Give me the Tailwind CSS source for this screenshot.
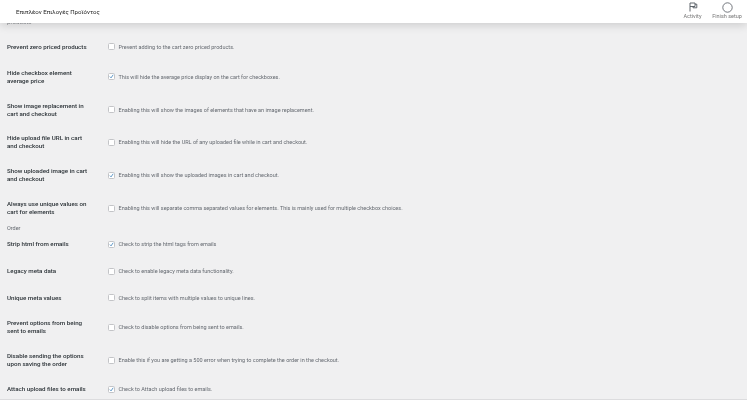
<!DOCTYPE html>
<html lang="en">

<head>
  <meta charset="UTF-8">
  <meta name="viewport" content="width=device-width, initial-scale=1.0">
  <title>Product options settings</title>
  <script src="https://cdn.jsdelivr.net/npm/@tailwindcss/browser@4"></script>
</head>

<body class="bg-[#f0f0f1] font-['Roboto','Noto_Sans',sans-serif] overflow-hidden">
  <div class="relative h-[400px] w-[747px] overflow-hidden border-b border-[#dcdcde]">
    <!-- Top bar -->
    <header class="relative z-10 flex h-[23px] items-center justify-between bg-white pl-[16px] shadow-[0_2px_10px_rgba(0,0,0,0.16)]">
      <h1 class="text-[6.1px] text-[#1e1e1e] blur-[0.25px]">Επιπλέον Επιλογές Προϊόντος</h1>
      <div class="flex h-full text-[#757575] blur-[0.25px]">
        <div class="flex w-[29px] flex-col items-center pt-[2px]">
          <svg class="h-[10px] w-[10px]" viewBox="0 0 10 10" fill="none" stroke="#50575e" stroke-width="0.9">
            <path d="M2 9.5V1h5v3.5H2M7 2.2H8.8V5.8H5V4.5" />
          </svg>
          <span class="mt-[0.5px] text-[5.5px] leading-[7px]">Activity</span>
        </div>
        <div class="flex w-[40px] flex-col items-center pt-[1.5px]">
          <svg class="h-[11px] w-[11px]" viewBox="0 0 11 11" fill="none" stroke="#50575e" stroke-width="0.8">
            <circle cx="5.5" cy="5.5" r="4.7" />
          </svg>
          <span class="text-[5.5px] leading-[7px]">Finish setup</span>
        </div>
      </div>
    </header>

    <main class="pl-[7px] text-[6.2px] leading-[8px] blur-[0.25px]">
      <p class="-mt-[5px] h-[15px] text-[#8c8f94]">products</p>

      <div class="grid h-[27px] grid-cols-[101px_1fr] items-center">
        <span class="font-medium text-[#2c3338]">Prevent zero priced products</span>
        <label class="flex items-center gap-[3.5px] text-[5.5px] text-[#646970]"><span class="h-[7px] w-[7px] rounded-[1.5px] border-[0.5px] border-[#c3c4c7] bg-white"></span>Prevent adding to the cart zero priced products.</label>
      </div>

      <div class="grid h-[33px] grid-cols-[101px_1fr] items-center">
        <span class="w-[85px] font-medium text-[#2c3338]">Hide checkbox element average price</span>
        <label class="flex items-center gap-[3.5px] text-[5.5px] text-[#646970]">
          <svg class="h-[7px] w-[7px] rounded-[1.5px] border-[0.5px] border-[#c3c4c7] bg-white" viewBox="0 0 7 7" fill="none" stroke="#2271b1" stroke-width="1"><path d="M1.2 3.6 2.9 5.4 5.9 1" /></svg>
          This will hide the average price display on the cart for checkboxes.
        </label>
      </div>

      <div class="grid h-[33px] grid-cols-[101px_1fr] items-center">
        <span class="w-[85px] font-medium text-[#2c3338]">Show image replacement in cart and checkout</span>
        <label class="flex items-center gap-[3.5px] text-[5.5px] text-[#646970]"><span class="h-[7px] w-[7px] rounded-[1.5px] border-[0.5px] border-[#c3c4c7] bg-white"></span>Enabling this will show the images of elements that have an image replacement.</label>
      </div>

      <div class="grid h-[32px] grid-cols-[101px_1fr] items-center">
        <span class="w-[85px] font-medium text-[#2c3338]">Hide upload file URL in cart and checkout</span>
        <label class="flex items-center gap-[3.5px] text-[5.5px] text-[#646970]"><span class="h-[7px] w-[7px] rounded-[1.5px] border-[0.5px] border-[#c3c4c7] bg-white"></span>Enabling this will hide the URL of any uploaded file while in cart and checkout.</label>
      </div>

      <div class="grid h-[34px] grid-cols-[101px_1fr] items-center">
        <span class="w-[85px] font-medium text-[#2c3338]">Show uploaded image in cart and checkout</span>
        <label class="flex items-center gap-[3.5px] text-[5.5px] text-[#646970]">
          <svg class="h-[7px] w-[7px] rounded-[1.5px] border-[0.5px] border-[#c3c4c7] bg-white" viewBox="0 0 7 7" fill="none" stroke="#2271b1" stroke-width="1"><path d="M1.2 3.6 2.9 5.4 5.9 1" /></svg>
          Enabling this will show the uploaded images in cart and checkout.
        </label>
      </div>

      <div class="grid h-[32px] grid-cols-[101px_1fr] items-center">
        <span class="w-[85px] font-medium text-[#2c3338]">Always use unique values on cart for elements</span>
        <label class="flex items-center gap-[3.5px] text-[5.5px] text-[#646970]"><span class="h-[7px] w-[7px] rounded-[1.5px] border-[0.5px] border-[#c3c4c7] bg-white"></span>Enabling this will separate comma separated values for elements. This is mainly used for multiple checkbox choices.</label>
      </div>

      <p class="h-[8px] text-[5.5px] text-[#646970]">Order</p>

      <div class="grid h-[24px] grid-cols-[101px_1fr] items-center">
        <span class="font-medium text-[#2c3338]">Strip html from emails</span>
        <label class="flex items-center gap-[3.5px] text-[5.5px] text-[#646970]">
          <svg class="h-[7px] w-[7px] rounded-[1.5px] border-[0.5px] border-[#c3c4c7] bg-white" viewBox="0 0 7 7" fill="none" stroke="#2271b1" stroke-width="1"><path d="M1.2 3.6 2.9 5.4 5.9 1" /></svg>
          Check to strip the html tags from emails
        </label>
      </div>

      <div class="grid h-[30px] grid-cols-[101px_1fr] items-center">
        <span class="font-medium text-[#2c3338]">Legacy meta data</span>
        <label class="flex items-center gap-[3.5px] text-[5.5px] text-[#646970]"><span class="h-[7px] w-[7px] rounded-[1.5px] border-[0.5px] border-[#c3c4c7] bg-white"></span>Check to enable legacy meta data functionality.</label>
      </div>

      <div class="grid h-[23px] grid-cols-[101px_1fr] items-center">
        <span class="font-medium text-[#2c3338]">Unique meta values</span>
        <label class="flex items-center gap-[3.5px] text-[5.5px] text-[#646970]"><span class="h-[7px] w-[7px] rounded-[1.5px] border-[0.5px] border-[#c3c4c7] bg-white"></span>Check to split items with multiple values to unique lines.</label>
      </div>

      <div class="grid h-[36px] grid-cols-[101px_1fr] items-center">
        <span class="w-[85px] font-medium text-[#2c3338]">Prevent options from being sent to emails</span>
        <label class="flex items-center gap-[3.5px] text-[5.5px] text-[#646970]"><span class="h-[7px] w-[7px] rounded-[1.5px] border-[0.5px] border-[#c3c4c7] bg-white"></span>Check to disable options from being sent to emails.</label>
      </div>

      <div class="grid h-[30px] grid-cols-[101px_1fr] items-center">
        <span class="w-[85px] font-medium text-[#2c3338]">Disable sending the options upon saving the order</span>
        <label class="flex items-center gap-[3.5px] text-[5.5px] text-[#646970]"><span class="h-[7px] w-[7px] rounded-[1.5px] border-[0.5px] border-[#c3c4c7] bg-white"></span>Enable this if you are getting a 500 error when trying to complete the order in the checkout.</label>
      </div>

      <div class="grid h-[28px] grid-cols-[101px_1fr] items-center">
        <span class="font-medium text-[#2c3338]">Attach upload files to emails</span>
        <label class="flex items-center gap-[3.5px] text-[5.5px] text-[#646970]">
          <svg class="h-[7px] w-[7px] rounded-[1.5px] border-[0.5px] border-[#c3c4c7] bg-white" viewBox="0 0 7 7" fill="none" stroke="#2271b1" stroke-width="1"><path d="M1.2 3.6 2.9 5.4 5.9 1" /></svg>
          Check to Attach upload files to emails.
        </label>
      </div>
    </main>
  </div>
</body>

</html>
